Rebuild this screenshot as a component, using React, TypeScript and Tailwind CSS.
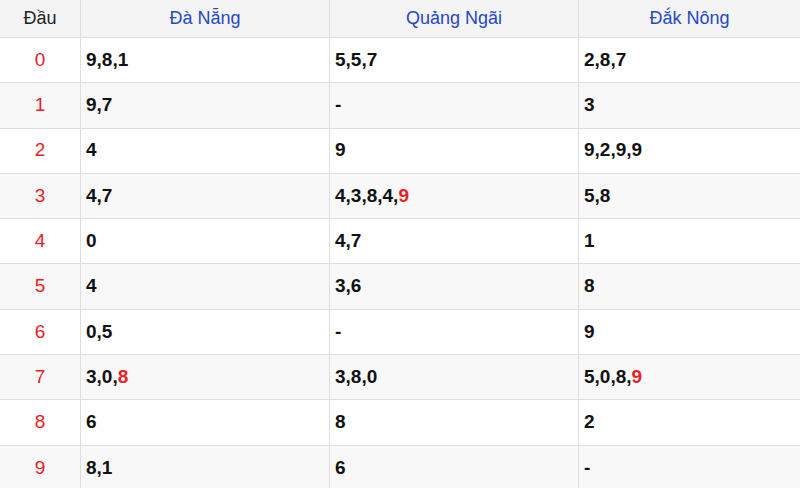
const rows: [string, React.ReactNode, React.ReactNode, React.ReactNode][] = [
  ["0", "9,8,1", "5,5,7", "2,8,7"],
  ["1", "9,7", "-", "3"],
  ["2", "4", "9", "9,2,9,9"],
  ["3", "4,7", <>4,3,8,4,<span className="text-[#ee1c25]">9</span></>, "5,8"],
  ["4", "0", "4,7", "1"],
  ["5", "4", "3,6", "8"],
  ["6", "0,5", "-", "9"],
  ["7", <>3,0,<span className="text-[#ee1c25]">8</span></>, "3,8,0", <>5,0,8,<span className="text-[#ee1c25]">9</span></>],
  ["8", "6", "8", "2"],
  ["9", "8,1", "6", "-"],
];

const cols = "grid grid-cols-[80px_249px_249px_222px]";

export default function App() {
  return (
    <div className="w-[800px] h-[488px] overflow-hidden bg-white" style={{ fontFamily: "'Liberation Sans', Arial, sans-serif" }}>
      <div className={`${cols} h-[38px] bg-[#f4f4f4] border-b border-[#dddde3] text-[18px]`}>
        <div className="flex items-center justify-center text-[#222]">Đầu</div>
        <div className="flex items-center justify-center border-l border-[#dddde3] text-[#2448c4]">Đà Nẵng</div>
        <div className="flex items-center justify-center border-l border-[#dddde3] text-[#2448c4]">Quảng Ngãi</div>
        <div className="flex items-center justify-center border-l border-[#dddde3] text-[#2448c4]">Đắk Nông</div>
      </div>
      {rows.map((r, i) => (
        <div key={i} className={`${cols} h-[45.3px] border-b border-[#dddde3] ${i % 2 ? "bg-[#f8f8f8]" : "bg-white"}`}>
          <div className="flex items-center justify-center text-[19px] text-[#ee1c25]">{r[0]}</div>
          {[r[1], r[2], r[3]].map((c, j) => (
            <div key={j} className="flex items-center pl-[5px] border-l border-[#dddde3] text-[19px] font-bold text-[#111]">{c}</div>
          ))}
        </div>
      ))}
    </div>
  );
}
